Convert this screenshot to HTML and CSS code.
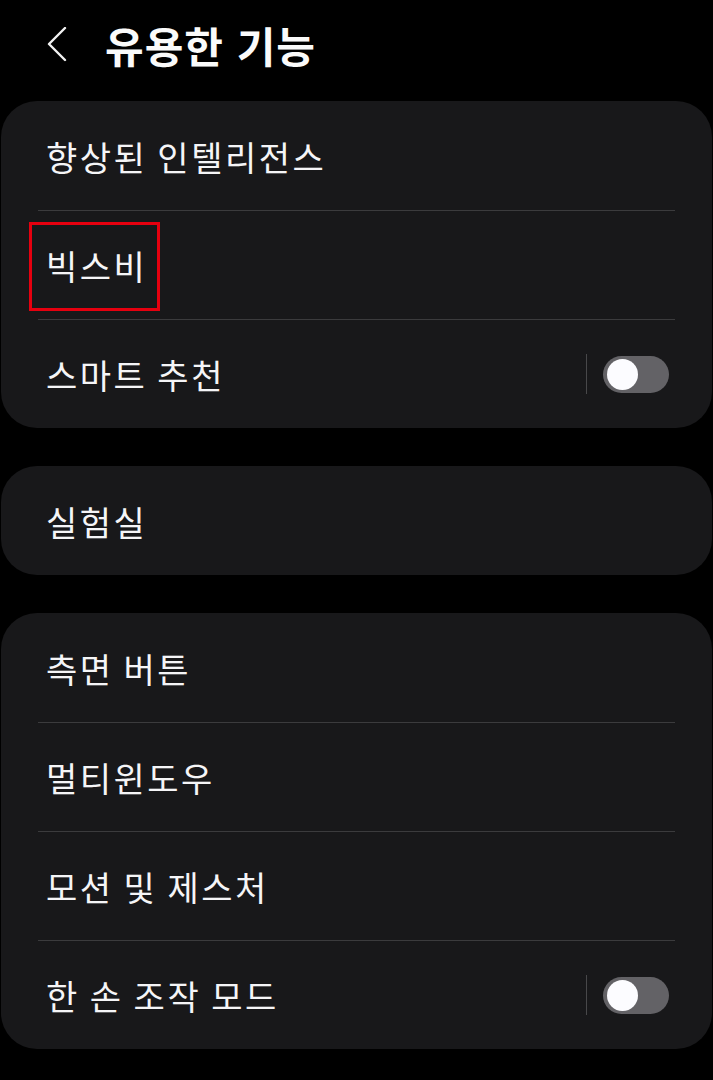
FILE: index.html
```html
<!DOCTYPE html>
<html lang="ko">
<head>
    <meta charset="UTF-8">
    <title>유용한 기능</title>
    <link rel="stylesheet" href="styles.css">
</head>
<body>
<div class="page">
    <div class="header">
        <svg class="back" width="24" height="36" viewBox="0 0 24 36">
            <path d="M19 1 L3 17 L19 33" fill="none" stroke="#f2f2f2" stroke-width="2.4" stroke-linecap="round" stroke-linejoin="round"/>
        </svg>
        <h1>유용한 기능</h1>
    </div>

    <ul class="card">
        <li class="row"><span class="label">향상된 인텔리전스</span></li>
        <li class="row"><span class="label marked">빅스비</span></li>
        <li class="row">
            <span class="label">스마트 추천</span>
            <span class="sep"></span>
            <span class="switch"><em></em></span>
        </li>
    </ul>

    <ul class="card">
        <li class="row"><span class="label">실험실</span></li>
    </ul>

    <ul class="card">
        <li class="row"><span class="label">측면 버튼</span></li>
        <li class="row"><span class="label">멀티윈도우</span></li>
        <li class="row"><span class="label">모션 및 제스처</span></li>
        <li class="row">
            <span class="label">한 손 조작 모드</span>
            <span class="sep"></span>
            <span class="switch"><em></em></span>
        </li>
    </ul>
</div>
</body>
</html>
```

FILE: styles.css
```css
body, div, ul, li, span, em, h1 {
    margin: 0;
    padding: 0;
    font-family: "Noto Sans CJK KR", "Noto Sans", sans-serif;
}

ul, li {
    list-style: none;
}

body {
    background: #000;
    color: #f5f5f7;
}

.page {
    width: 713px;
    padding-bottom: 32px;
}

.header {
    display: flex;
    align-items: center;
    height: 88px;
    padding-left: 46px;
    padding-bottom: 13px;
}

.header .back {
    display: block;
    margin-top: 2px;
}

.header h1 {
    margin-left: 35px;
    font-size: 42px;
    font-weight: 700;
    letter-spacing: 1px;
    color: #fafafa;
}

.card {
    margin: 0 1px 38px 1px;
    background: #18181a;
    border-radius: 36px;
}

.row {
    display: flex;
    align-items: center;
    height: 109px;
    margin: 0 37px;
    padding-left: 8px;
    border-top: 1px solid #3b3b3d;
    box-sizing: border-box;
}

.row:first-child {
    border-top: none;
}

.label {
    flex: 1;
    font-size: 34px;
    line-height: 40px;
    font-weight: 400;
    letter-spacing: 2.5px;
    word-spacing: -2px;
    margin-top: 2px;
}

.label.marked {
    flex: none;
    position: relative;
}

.label.marked::after {
    content: "";
    position: absolute;
    left: -17px;
    right: -13px;
    top: -24px;
    bottom: -25px;
    border: 3px solid #e5000f;
}

.sep {
    width: 1px;
    height: 40px;
    background: #48484a;
    margin-right: 16px;
}

.switch {
    position: relative;
    width: 66px;
    height: 37px;
    margin-right: 6px;
    border-radius: 19px;
    background: #636266;
}

.switch em {
    position: absolute;
    left: 4px;
    top: 3px;
    width: 31px;
    height: 31px;
    border-radius: 50%;
    background: #fcfcff;
}
```
